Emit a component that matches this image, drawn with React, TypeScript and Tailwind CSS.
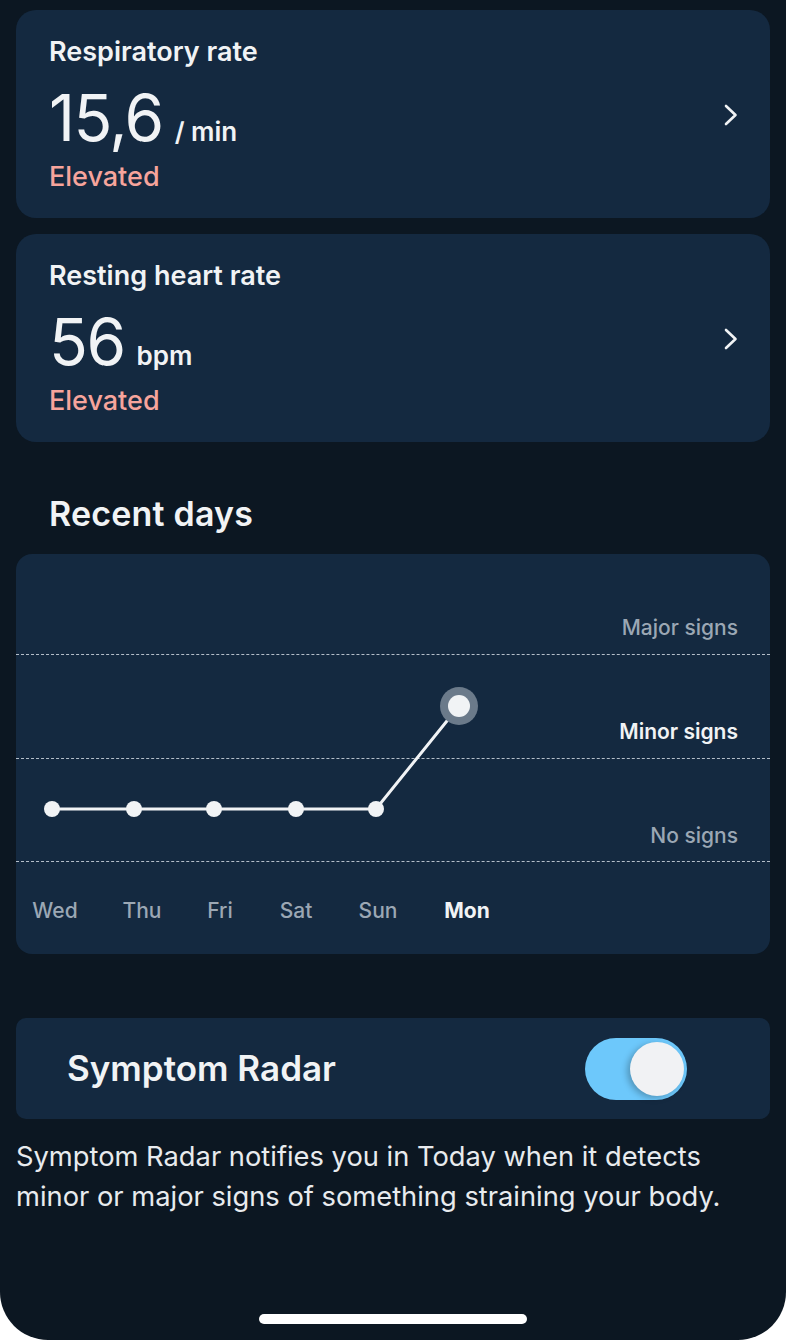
const FONT = { fontFamily: "Inter, 'Noto Sans', sans-serif" };

const metrics = [
  { title: "Respiratory rate", value: "15,6", unit: "/ min", status: "Elevated" },
  { title: "Resting heart rate", value: "56", unit: "bpm", status: "Elevated" },
];

const bands = [
  { label: "Major signs", active: false, h: "h-[101px]", pb: "pb-[14px]" },
  { label: "Minor signs", active: true, h: "h-[104px]", pb: "pb-[14px]" },
  { label: "No signs", active: false, h: "h-[103px]", pb: "pb-[13px]" },
];

const days = ["Wed", "Thu", "Fri", "Sat", "Sun", "Mon"];

// plot points, relative to the chart card
const points = [
  [36, 255],
  [118, 255],
  [198, 255],
  [280, 255],
  [360, 255],
  [443, 152],
];

function Chevron() {
  return (
    <svg width="14" height="22" viewBox="0 0 14 22" fill="none">
      <path d="M2 2l9.5 9-9.5 9" stroke="#f1f3f5" strokeWidth="2.6" strokeLinecap="round" strokeLinejoin="round" />
    </svg>
  );
}

function MetricCard({ title, value, unit, status }: (typeof metrics)[number]) {
  return (
    <div className="bg-[#142940] rounded-[20px] pl-[33px] pr-[32px] pt-[26px] pb-[25px] flex items-center justify-between">
      <div>
        <p className="text-[27px] leading-[32px] font-semibold text-[#f1f3f5]">{title}</p>
        <div className="mt-[14px] flex items-baseline gap-[12px] h-[72px]">
          <span className="text-[64px] leading-[72px] font-normal tracking-[-1.5px] text-[#f1f3f5]">{value}</span>
          <span className="text-[26px] font-semibold text-[#f1f3f5]">{unit}</span>
        </div>
        <p className="mt-[7px] text-[27px] leading-[32px] font-medium text-[#f7a49c]">{status}</p>
      </div>
      <Chevron />
    </div>
  );
}

function RecentDays() {
  const line = points.map((p) => p.join(",")).join(" ");
  const last = points[points.length - 1];
  return (
    <div className="relative bg-[#142940] rounded-[16px] h-[400px] overflow-hidden">
      {bands.map((b) => (
        <div
          key={b.label}
          className={`${b.h} ${b.pb} flex items-end justify-end pr-[32px] border-b border-dashed border-[#b4bec9]`}
        >
          <span
            className={`text-[21px] leading-[24px] ${
              b.active ? "font-semibold text-[#f1f3f5]" : "font-medium text-[#9ba7b4]"
            }`}
          >
            {b.label}
          </span>
        </div>
      ))}
      <div className="grid grid-cols-[78px_96px_60px_92px_72px_106px] pt-[37px]">
        {days.map((d) => (
          <span
            key={d}
            className={`text-center text-[21px] leading-[24px] ${
              d === "Mon" ? "font-bold text-[#f1f3f5]" : "font-medium text-[#9ba7b4]"
            }`}
          >
            {d}
          </span>
        ))}
      </div>
      <svg className="absolute inset-0" width="754" height="400" viewBox="0 0 754 400">
        <polyline points={line} fill="none" stroke="#f1f3f5" strokeWidth="3" />
        {points.slice(0, -1).map(([x, y]) => (
          <circle key={x} cx={x} cy={y} r="8" fill="#f1f3f5" />
        ))}
        <circle cx={last[0]} cy={last[1]} r="19" fill="#6b7a8a" />
        <circle cx={last[0]} cy={last[1]} r="11" fill="#f1f3f5" />
      </svg>
    </div>
  );
}

export default function App() {
  return (
    <div className="w-[786px] h-[1340px] bg-white" style={FONT}>
      <div className="h-full bg-[#0c1722] rounded-b-[48px] flex flex-col px-[16px] pt-[10px]">
        <div className="flex flex-col gap-[16px]">
          {metrics.map((m) => (
            <MetricCard key={m.title} {...m} />
          ))}
        </div>

        <h2 className="mt-[52px] mb-[20px] pl-[33px] text-[34px] leading-[40px] font-semibold tracking-[0.2px] text-[#f1f3f5]">
          Recent days
        </h2>

        <RecentDays />

        <div className="mt-[64px] h-[101px] bg-[#142940] rounded-[10px] flex items-center justify-between pl-[51px] pr-[83px]">
          <span className="text-[35px] font-semibold text-[#f1f3f5]">Symptom Radar</span>
          <div className="w-[102px] h-[62px] rounded-full bg-[#6dc8fb] flex items-center justify-end pr-[3px]">
            <div className="w-[54px] h-[54px] rounded-full bg-[#f1f2f4] shadow-[-3px_2px_6px_rgba(0,0,0,0.25)]" />
          </div>
        </div>

        <p className="mt-[18px] text-[27.3px] leading-[40px] text-[#e8ebee]">
          Symptom Radar notifies you in Today when it detects minor or major signs of something straining your body.
        </p>

        <div className="flex-1" />
        <div className="mx-auto mb-[16px] w-[268px] h-[10px] rounded-full bg-white" />
      </div>
    </div>
  );
}
